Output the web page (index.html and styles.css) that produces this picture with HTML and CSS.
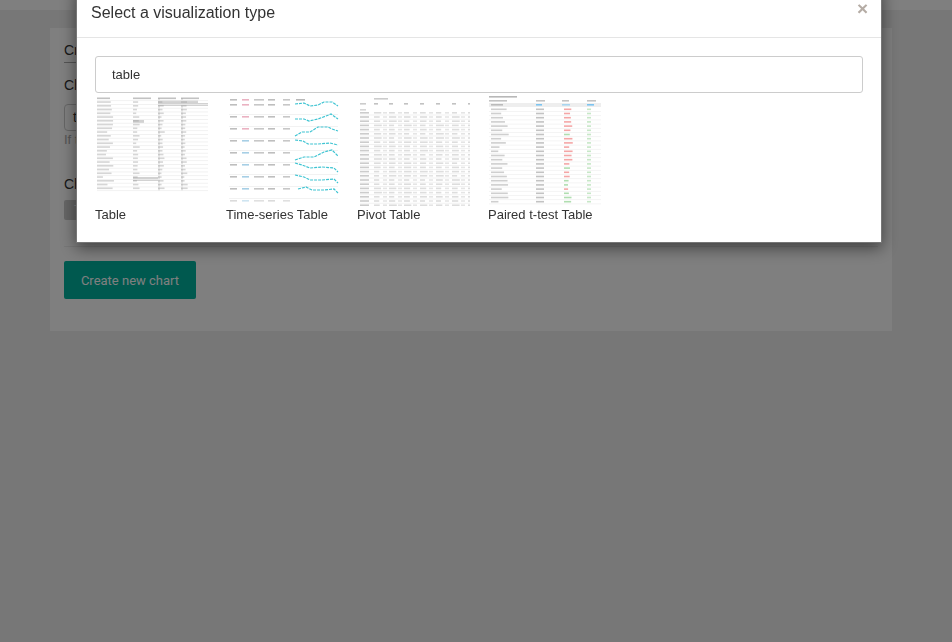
FILE: index.html
```html
<!DOCTYPE html>
<html lang="en">
<head>
	<meta charset="UTF-8">
	<title>Add new chart</title>
	<link rel="stylesheet" href="styles.css">
</head>
<body>
	<div class="topbar"></div>
	<div class="card">
		<h3 class="card-title">Create a new chart</h3>
		<label class="field-label">Choose a datasource</label>
		<div class="fake-select">table</div>
		<p class="help">If the datasource you are looking for is not available in the list</p>
		<label class="field-label chart-label">Choose a visualization type</label>
		<span class="tag">Table</span>
		<hr class="divider">
		<button class="btn-create">Create new chart</button>
	</div>

	<div class="backdrop"></div>

	<div class="modal">
		<div class="modal-header">
			<h4 class="modal-title">Select a visualization type</h4>
			<span class="close">&times;</span>
		</div>
		<div class="modal-body">
			<input class="search" type="text" value="table">
			<div class="viz-list">
				<div class="viz">
					<svg id="thumbTable" class="thumb" width="113" height="110"></svg>
					<div class="viz-name">Table</div>
				</div>
				<div class="viz">
					<svg id="thumbSeries" class="thumb" width="113" height="110"></svg>
					<div class="viz-name">Time-series Table</div>
				</div>
				<div class="viz">
					<svg id="thumbPivot" class="thumb" width="113" height="110"></svg>
					<div class="viz-name">Pivot Table</div>
				</div>
				<div class="viz">
					<svg id="thumbPaired" class="thumb" width="113" height="110"></svg>
					<div class="viz-name">Paired t-test Table</div>
				</div>
			</div>
		</div>
	</div>

	<script src="thumbs.js"></script>
</body>
</html>
```

FILE: styles.css
```css
*{padding: 0;margin: 0;box-sizing: border-box;}
body{
	background: #eee;
	height: 642px;
	overflow: hidden;
	font-family: "Liberation Sans", Arial, sans-serif;
	font-size: 13px;
	color: #333;
}

.topbar{
	height: 10px;
	background: #fff;
}

.card{
	margin: 18px 60px 0 50px;
	height: 303px;
	background: #fff;
	padding: 13px 14px;
	display: flex;
	flex-direction: column;
	align-items: flex-start;
}
.card-title{
	width: 100%;
	font-size: 14px;
	font-weight: normal;
	line-height: 18px;
	padding-bottom: 3px;
	border-bottom: 1px solid #aaa;
}
.field-label{
	display: block;
	font-size: 14px;
	line-height: 20px;
	margin-top: 12px;
}
.fake-select{
	width: 300px;
	height: 27px;
	margin-top: 9px;
	padding: 4px 8px;
	border: 1px solid #ccc;
	border-radius: 4px;
	font-size: 14px;
}
.help{
	font-size: 13px;
	line-height: 18px;
	color: #aaa;
}
.chart-label{
	margin-top: 25px;
}
.tag{
	display: block;
	height: 20px;
	margin-top: 6px;
	padding: 2px 10px;
	background: #ccc;
	color: #fff;
	border-radius: 2px;
}
.divider{
	width: 100%;
	border: 0;
	border-top: 1px solid #eee;
	margin-top: 26px;
}
.btn-create{
	width: 132px;
	height: 38px;
	margin-top: 14px;
	background: #00b39f;
	border: 0;
	border-radius: 2px;
	color: #fff;
	font-family: "Roboto", sans-serif;
	font-size: 13px;
}

.backdrop{
	position: fixed;
	top: 0;
	left: 0;
	right: 0;
	bottom: 0;
	background: rgba(0,0,0,0.5);
}

.modal{
	position: fixed;
	top: -15px;
	left: 76px;
	width: 806px;
	height: 258px;
	background: #fff;
	border: 1px solid #777;
	box-shadow: 0 5px 15px rgba(0,0,0,0.5);
}
.modal-header{
	height: 52px;
	padding: 16px 13px 0 14px;
	display: flex;
	justify-content: space-between;
	border-bottom: 1px solid #e5e5e5;
}
.modal-title{
	font-size: 16px;
	font-weight: normal;
	line-height: 22px;
}
.close{
	margin-top: -2px;
	font-size: 19px;
	font-weight: bold;
	line-height: 18px;
	color: #b5aca5;
}
.modal-body{
	padding: 18px 18px 0 18px;
}
.search{
	display: block;
	width: 768px;
	height: 37px;
	padding: 0 16px;
	border: 1px solid #ccc;
	border-radius: 3px;
	font-family: inherit;
	font-size: 13px;
	color: #333;
}
.viz-list{
	display: flex;
	gap: 18px;
	margin-top: 4px;
}
.viz{
	width: 113px;
}
.thumb{
	display: block;
	filter: blur(0.5px);
}
.viz-name{
	line-height: 15px;
	white-space: nowrap;
	font-size: 13px;
}
```

FILE: thumbs.js
```js
var SVG_NS = 'http://www.w3.org/2000/svg';
var seed = 7;

function rnd(){
	seed = (seed * 16807) % 2147483647;
	return seed / 2147483647;
}

function rect(svg,x,y,w,h,color,op){
	var r = document.createElementNS(SVG_NS,'rect');
	r.setAttribute('x',x);
	r.setAttribute('y',y);
	r.setAttribute('width',w);
	r.setAttribute('height',h);
	r.setAttribute('fill',color);
	r.setAttribute('opacity',op);
	svg.appendChild(r);
}

function line(svg,points){
	var p = document.createElementNS(SVG_NS,'polyline');
	p.setAttribute('points',points);
	p.setAttribute('fill','none');
	p.setAttribute('stroke','#3fc4d2');
	p.setAttribute('stroke-width','1.2');
	p.setAttribute('stroke-dasharray','3 1');
	svg.appendChild(p);
}

// Table: svg starts at x 95, y 97
var t = document.getElementById('thumbTable');
var cols = [2,38,63,86];
rect(t,63,1,2,93,'#ddd',0.7);
rect(t,86,1,2,93,'#ddd',0.7);
rect(t,63,3,23,6,'#d2d2d2',1);
rect(t,86,3,17,3,'#d2d2d2',1);
rect(t,86,6,27,3,'#d2d2d2',1);
rect(t,38,23,11,3,'#d2d2d2',1);
rect(t,38,80,25,4,'#d2d2d2',1);
for(var i=0;i<25;i++){
	var y = 0.5 + i*3.75;
	rect(t,2,y+2.8,111,0.8,'#eee',1);
	for(var j=0;j<cols.length;j++){
		var w = j==0 ? 5+rnd()*12 : 3+rnd()*4;
		if(i==0) w = j==0 ? 13 : 18;
		rect(t,cols[j],y,w,1.6,'#999',i==0 ? 0.6 : 0.4);
	}
}

// Time-series table
var s = document.getElementById('thumbSeries');
var sCols = [4,16,28,42,57];
var sColors = ['#888','#d9738f','#999','#888','#999'];
var sRows = [2,7,19,31,43,55,67,79,91,103];
for(var i=0;i<sRows.length;i++){
	var y = sRows[i];
	if(i>0 && i<9) rect(s,3,y+10,109,1,'#f2f2f2',1);
	for(var j=0;j<sCols.length;j++){
		var c = sColors[j];
		if(i>3 && j==1) c = '#5fa8d0';
		rect(s,sCols[j],y,j==2 ? 10 : 7,1.6,c,i==9 ? 0.3 : 0.55);
	}
}
rect(s,70,2,9,1.6,'#888',0.6);
line(s,'69,7 78,6 84,9 92,8 98,5 106,5 112,9');
line(s,'69,22 78,22 83,24 92,22 100,19 105,17 112,22');
line(s,'69,39 76,35 84,35 92,30 102,30 106,32 112,34');
line(s,'69,43 77,44 82,47 92,47 104,46 112,48');
line(s,'69,63 78,60 88,60 98,55 106,53 112,59');
line(s,'69,66 76,68 84,71 96,70 108,71 112,75');
line(s,'69,78 78,80 84,83 96,83 108,82 112,86');
line(s,'72,92 80,90 86,93 98,93 108,92 112,96');

// Pivot table
var p = document.getElementById('thumbPivot');
var pCols = [4,19,34,50,66,82,98];
rect(p,17,1,14,1.6,'#999',0.5);
rect(p,3,6,6,1.6,'#999',0.5);
rect(p,3,12,6,1.6,'#999',0.4);
for(var j=0;j<pCols.length;j++){
	rect(p,pCols[j]+13,6,4,1.6,'#999',0.6);
}
for(var i=0;i<23;i++){
	var y = 15 + i*4.2;
	rect(p,3,y+2.6,110,0.8,'#eee',1);
	rect(p,3,y,9,1.6,'#999',0.5);
	for(var j=0;j<pCols.length;j++){
		var x = pCols[j]+13;
		rect(p,x,y,5+rnd()*3,1.6,'#aaa',0.4);
		rect(p,x+9,y,4,1.6,'#aaa',0.3);
	}
}

// Paired t-test table
var q = document.getElementById('thumbPaired');
q.style.overflow = 'visible';
rect(q,1,-5,112,1,'#ccc',1);
rect(q,1,-1,28,1.6,'#888',0.6);
rect(q,1,3,18,1.6,'#888',0.5);
rect(q,48,3,9,1.6,'#888',0.5);
rect(q,74,3,7,1.6,'#888',0.5);
rect(q,99,3,9,1.6,'#888',0.5);
rect(q,1,6,112,4,'#eee',1);
rect(q,3,7,12,1.6,'#888',0.5);
rect(q,48,7,6,1.6,'#7cc4f0',1);
rect(q,74,7,8,1.6,'#7cc4f0',0.6);
rect(q,99,7,7,1.6,'#7cc4f0',1);
for(var i=0;i<23;i++){
	var y = 11.5 + i*4.2;
	rect(q,1,y+2.6,112,0.8,'#f1f1f1',1);
	rect(q,3,y,6+rnd()*12,1.6,'#888',0.4);
	rect(q,48,y,8,1.6,'#888',0.5);
	rect(q,76,y,4+rnd()*5,1.6,rnd()>0.45 ? '#f08080' : '#8fd08f',0.7);
	rect(q,99,y,4,1.6,'#8fd08f',0.5);
}
```
